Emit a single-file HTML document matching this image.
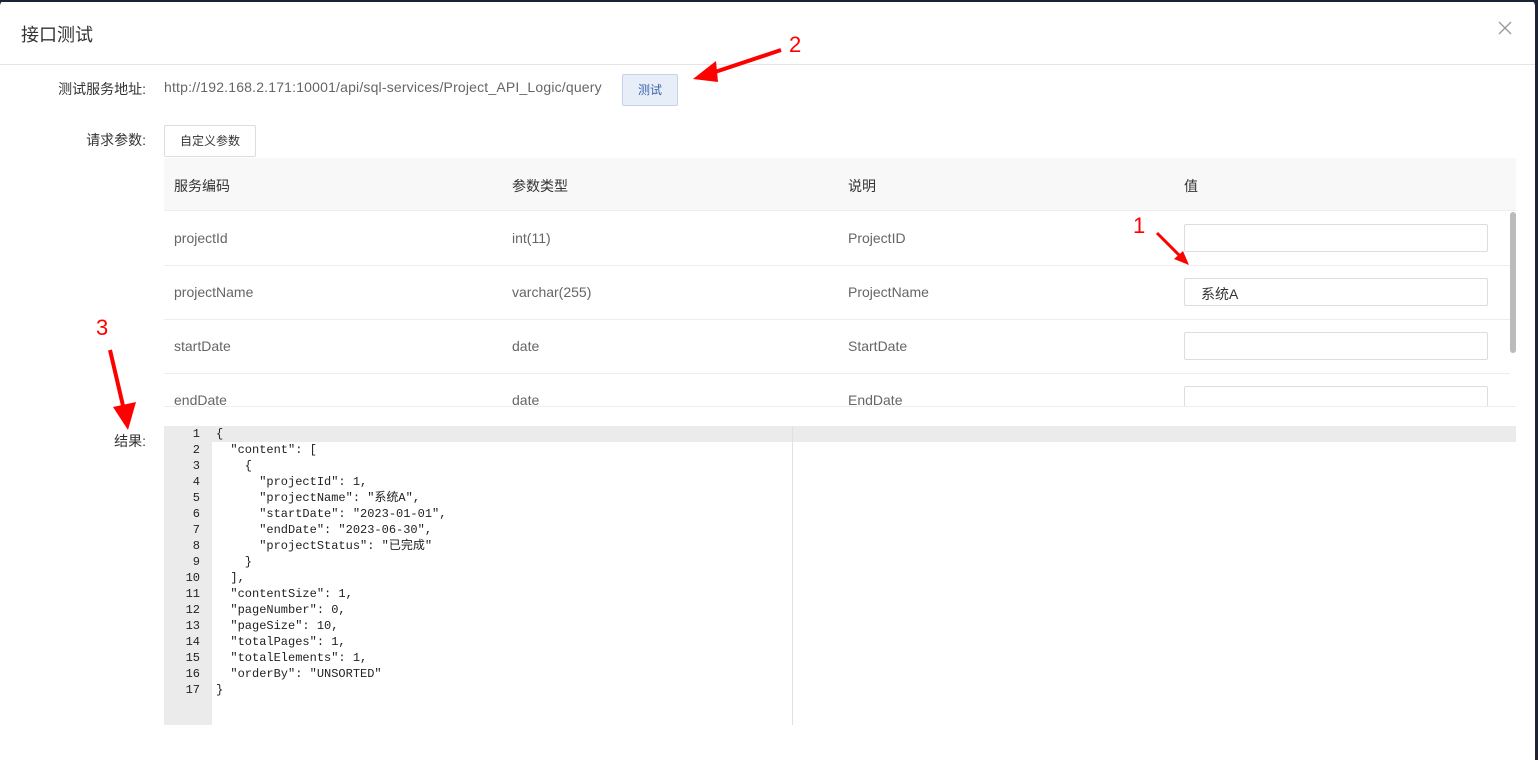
<!DOCTYPE html>
<html><head><meta charset="utf-8"><style>
*{box-sizing:border-box;margin:0;padding:0}
body{width:1538px;height:752px;background:#1c2433;position:relative;overflow:hidden;font-family:"Liberation Sans","Noto Sans CJK SC",sans-serif;}
.modal{position:absolute;left:0;top:0;width:1535px;height:760px;background:#fff;border-radius:6px 6px 0 0}
.title{position:absolute;left:21px;top:21px;font-size:18px;color:#333}
.close{position:absolute;left:1498px;top:21px}
.hr{position:absolute;left:0;top:64px;width:1535px;height:1px;background:#e5e5e5}
.lbl{position:absolute;font-size:14px;color:#333;text-align:right;width:146px;left:0}
.url{position:absolute;left:164px;top:79px;font-size:14px;color:#666;letter-spacing:0.18px}
.btn{position:absolute;border-radius:2px;font-size:12px;text-align:center}
.tbl{position:absolute;left:164px;top:158px;width:1352px;height:249px;overflow:hidden}
.th{position:absolute;left:0;top:0;width:1352px;height:53px;background:#f8f8f8;border-bottom:1px solid #eee}
.row{position:absolute;left:0;width:1346px;height:54px;border-bottom:1px solid #eee}
.c{position:absolute;font-size:14px;color:#666;top:18px}
.th .c{color:#333;top:18px}
.inp{position:absolute;left:1020px;top:12px;width:304px;height:28px;border:1px solid #ddd;border-radius:2px;font-size:14px;color:#333;padding:5px 0 0 16px}
.code{position:absolute;left:164px;top:426px;width:1352px;height:299px;font-family:"Liberation Mono","Noto Sans CJK SC",monospace;font-size:12px;color:#222}
.gut{position:absolute;left:0;top:0;width:48px;height:299px;background:#ebebeb}
.hl{position:absolute;left:48px;top:0;width:1304px;height:16px;background:#ebebeb}
.ln{position:absolute;left:0;width:36px;text-align:right;line-height:16px}
.tx{position:absolute;left:52px;line-height:16px;white-space:pre}
</style></head><body>
<div class="modal">
<div style="position:absolute;left:0;top:0;width:1535px;height:2px;background:#1c2433"></div>
<div class="title">接口测试</div>
<svg class="close" width="14" height="14" viewBox="0 0 14 14"><path d="M1 1L13 13M13 1L1 13" stroke="#999" stroke-width="1.3"/></svg>
<div class="hr"></div>
<div class="lbl" style="top:79px">测试服务地址:</div>
<div class="url">http://192.168.2.171:10001/api/sql-services/Project_API_Logic/query</div>
<div class="btn" style="left:622px;top:74px;width:56px;height:32px;background:#e8eef8;border:1px solid #c5d3ea;color:#3a63b0;line-height:30px">测试</div>
<div class="lbl" style="top:130px">请求参数:</div>
<div class="btn" style="left:164px;top:125px;width:92px;height:32px;border:1px solid #ddd;color:#333;line-height:30px">自定义参数</div>
<div class="tbl">
<div class="th"><span class="c" style="left:10px">服务编码</span><span class="c" style="left:348px">参数类型</span><span class="c" style="left:684px">说明</span><span class="c" style="left:1020px">值</span></div>
<div class="row" style="top:54px"><span class="c" style="left:10px">projectId</span><span class="c" style="left:348px">int(11)</span><span class="c" style="left:684px">ProjectID</span><div class="inp"></div></div>
<div class="row" style="top:108px"><span class="c" style="left:10px">projectName</span><span class="c" style="left:348px">varchar(255)</span><span class="c" style="left:684px">ProjectName</span><div class="inp">系统A</div></div>
<div class="row" style="top:162px"><span class="c" style="left:10px">startDate</span><span class="c" style="left:348px">date</span><span class="c" style="left:684px">StartDate</span><div class="inp"></div></div>
<div class="row" style="top:216px"><span class="c" style="left:10px">endDate</span><span class="c" style="left:348px">date</span><span class="c" style="left:684px">EndDate</span><div class="inp"></div></div>
<div style="position:absolute;left:1346px;top:54px;width:6px;height:141px;background:#bbb;border-radius:3px"></div>
</div>
<div style="position:absolute;left:164px;top:406px;width:1352px;height:1px;background:#eee"></div>
<div class="lbl" style="top:431px">结果:</div>
<div class="code">
<div class="gut"></div><div class="hl"></div>
<div style="position:absolute;left:628px;top:0;width:1px;height:299px;background:#e0e0e0"></div>
<div class="ln" style="top:0">1</div><div class="ln" style="top:16px">2</div><div class="ln" style="top:32px">3</div><div class="ln" style="top:48px">4</div><div class="ln" style="top:64px">5</div><div class="ln" style="top:80px">6</div><div class="ln" style="top:96px">7</div><div class="ln" style="top:112px">8</div><div class="ln" style="top:128px">9</div><div class="ln" style="top:144px">10</div><div class="ln" style="top:160px">11</div><div class="ln" style="top:176px">12</div><div class="ln" style="top:192px">13</div><div class="ln" style="top:208px">14</div><div class="ln" style="top:224px">15</div><div class="ln" style="top:240px">16</div><div class="ln" style="top:256px">17</div>
<div class="tx" style="top:0">{
  "content": [
    {
      "projectId": 1,
      "projectName": "系统A",
      "startDate": "2023-01-01",
      "endDate": "2023-06-30",
      "projectStatus": "已完成"
    }
  ],
  "contentSize": 1,
  "pageNumber": 0,
  "pageSize": 10,
  "totalPages": 1,
  "totalElements": 1,
  "orderBy": "UNSORTED"
}</div>
</div>
</div>
<svg style="position:absolute;left:0;top:0" width="1538" height="752">
<g fill="#f00" stroke="#f00">
<line x1="781" y1="50" x2="712" y2="73" stroke-width="4"/>
<polygon points="693,79 716,61 718,82" stroke="none"/>
<line x1="1157" y1="233" x2="1181" y2="257" stroke-width="3"/>
<polygon points="1189,265 1174,259 1183,251" stroke="none"/>
<line x1="110" y1="350" x2="124" y2="410" stroke-width="4"/>
<polygon points="128,430 113,407 136,402" stroke="none"/>
</g>
<g fill="#f00" font-family="Liberation Sans,sans-serif" font-size="22">
<text x="789" y="52">2</text><text x="1133" y="233">1</text><text x="96" y="335">3</text>
</g>
</svg>
</body></html>
